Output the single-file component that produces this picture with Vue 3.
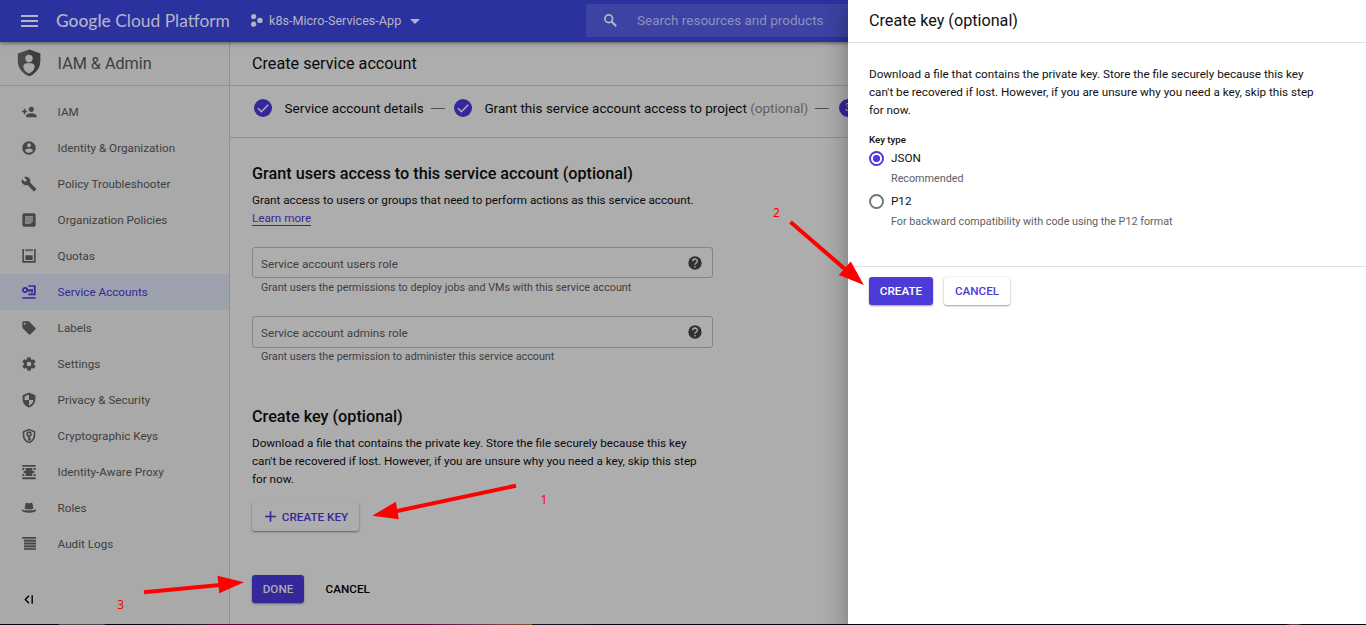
<script setup>
const navItems = [
  { label: 'IAM', icon: 'iam' },
  { label: 'Identity & Organization', icon: 'identity' },
  { label: 'Policy Troubleshooter', icon: 'wrench' },
  { label: 'Organization Policies', icon: 'policies' },
  { label: 'Quotas', icon: 'quotas' },
  { label: 'Service Accounts', icon: 'accounts', active: true },
  { label: 'Labels', icon: 'label' },
  { label: 'Settings', icon: 'settings' },
  { label: 'Privacy & Security', icon: 'security' },
  { label: 'Cryptographic Keys', icon: 'crypto' },
  { label: 'Identity-Aware Proxy', icon: 'proxy' },
  { label: 'Roles', icon: 'roles' },
  { label: 'Audit Logs', icon: 'logs' },
]

const icons = {
  iam: 'M15.500 12c2.200 0 4-1.800 4-4s-1.800-4-4-4-4 1.800-4 4 1.800 4 4 4zM6.500 10V7H4.200v3H1.500v2.300h2.700v3h2.300v-3h2.700V10zm9 4c-2.700 0-8 1.300-8 4v2h16v-2c0-2.700-5.300-4-8-4z',
  identity: 'M12 2C6.500 2 2 6.500 2 12s4.500 10 10 10 10-4.500 10-10S17.500 2 12 2zm0 3a3 3 0 110 6 3 3 0 010-6zm0 14.200c-2.500 0-4.700-1.300-6-3.200 0-2 4-3.100 6-3.100s6 1.100 6 3.100a7.200 7.200 0 01-6 3.200z',
  wrench: 'M22.700 19l-9.100-9.100c.9-2.300.4-5-1.500-6.900-2-2-5-2.400-7.400-1.300L9 6 6 9 1.600 4.700C.4 7.100.9 10.100 2.900 12.100c1.900 1.900 4.600 2.400 6.900 1.500l9.100 9.100c.4.4 1 .4 1.400 0l2.300-2.300c.5-.4.5-1.100.1-1.400z',
  label: 'M21.400 11.600l-9-9C12 2.200 11.500 2 11 2H4c-1.100 0-2 .9-2 2v7c0 .5.200 1 .6 1.400l9 9c.8.8 2 .8 2.800 0l7-7c.8-.8.8-2 0-2.800zM5.500 7a1.500 1.500 0 110-3 1.500 1.500 0 010 3z',
  settings: 'M19.400 13l.1-1-.1-1 2.100-1.600c.2-.2.3-.5.1-.7l-2-3.500c-.1-.2-.4-.3-.6-.2l-2.500 1a7 7 0 00-1.700-1l-.4-2.600c0-.2-.2-.4-.5-.4h-4c-.2 0-.4.2-.5.4L9 5a7 7 0 00-1.700 1l-2.500-1c-.2-.1-.5 0-.6.2l-2 3.500c-.1.2-.1.500.1.700L4.500 11l-.1 1 .1 1-2.100 1.600c-.2.2-.3.500-.1.700l2 3.500c.1.200.4.300.6.200l2.500-1a7 7 0 001.700 1l.4 2.600c0 .2.200.4.5.4h4c.2 0 .4-.2.5-.4L15 19a7 7 0 001.700-1l2.500 1c.2.1.5 0 .6-.2l2-3.500c.1-.2.1-.5-.1-.7zM12 15.500a3.500 3.500 0 110-7 3.500 3.500 0 010 7z',
  security: 'M12 .8L2.400 4.800v6.200c0 5.500 4 10.900 9.600 12.200 5.600-1.300 9.600-6.700 9.600-12.200V4.800zm0 11.200h6.600c-.5 4-3 7.300-6.600 8.400V12H5.400V6.800L12 3.900z',
  crypto: 'M12 1L2.600 5v6c0 5.500 4 10.700 9.400 12 5.400-1.300 9.400-6.500 9.400-12V5zm0 2.400l7 3V11c0 4.500-3 8.400-7 9.700C8 19.400 5 15.500 5 11V6.400zM12 5a4.200 4.200 0 00-1.300 8.200V19h2.600v-1.300H15v-2.200h-1.700v-2.300A4.200 4.200 0 0012 5zm0 2.500a1.700 1.700 0 110 3.400 1.700 1.700 0 010-3.400z',
  roles: 'M5.500 13l1-6.500C7.300 3.500 9.500 4 12 5.300c2.500-1.300 4.700-1.800 5.500 1.200l1 6.500c-3.500 1.500-9.500 1.500-13 0zM1 14c4.500 2.400 17.500 2.400 22 0 .8 7-22.800 7-22 0z',
}
</script>

<template>
  <div class="page">
    <header class="topbar">
      <svg class="burger" viewBox="0 0 17 12"><path d="M0 1h17M0 6h17M0 11h17" stroke="currentColor" stroke-width="1.800" /></svg>
      <div class="brand"><b>Google</b> Cloud Platform</div>
      <div class="project">
        <svg class="hex" viewBox="0 0 12 13" fill="currentColor"><circle cx="3.200" cy="2.600" r="2.600" /><circle cx="9.400" cy="6.400" r="2.700" /><circle cx="3.200" cy="10.200" r="2.600" /></svg>
        <span class="project-name">k8s-Micro-Services-App</span>
        <svg class="caret" viewBox="0 0 10 5"><path d="M0 0h10L5 5z" fill="currentColor" /></svg>
      </div>
      <div class="search">
        <svg viewBox="0 0 24 24" fill="none" stroke="currentColor"><circle cx="9.500" cy="9.500" r="5.400" stroke-width="2.400" /><path d="M13.700 13.700l6.300 6.300" stroke-width="3" /></svg>
        <span>Search resources and products</span>
      </div>
    </header>

    <div class="body">
      <aside class="sidebar">
        <div class="product">
          <svg class="shield" viewBox="0 0 24 28">
            <path d="M12 .5L.8 4.600V12c0 7 4.600 12.600 11.200 15.300C18.600 24.600 23.200 19 23.200 12V4.600z" fill="#494949" />
            <path d="M12 .5L23.200 4.600V12c0 7-4.600 12.600-11.200 15.300z" fill="#3d3d3d" />
            <circle cx="12" cy="9.500" r="3.700" fill="#a9a9a9" />
            <path d="M6.400 17.200c0-2.300 2.300-3.300 5.600-3.300s5.600 1 5.600 3.300c0 3.600-2.300 6-5.600 7.300-3.300-1.300-5.600-3.700-5.600-7.300z" fill="#a9a9a9" />
          </svg>
          <span>IAM &amp; Admin</span>
        </div>
        <nav>
          <div v-for="n in navItems" :key="n.label" class="nav-item" :class="{ active: n.active }">
            <svg viewBox="0 0 24 24" fill="currentColor">
              <path v-if="icons[n.icon]" :d="icons[n.icon]" fill-rule="evenodd" />
              <template v-else-if="n.icon === 'policies'">
                <rect x="2" y="2" width="20" height="20" rx="2.500" />
                <path d="M6 6h12v8l-4 4H6z" fill="#858585" />
                <path d="M6 9h12M6 12.500h12" stroke="#777" stroke-width="1" />
              </template>
              <template v-else-if="n.icon === 'quotas'">
                <path d="M3.200 1.500v19.300h17.600V1.500" fill="none" stroke="currentColor" stroke-width="2.400" />
                <path d="M6.500 11h11v7h-11zM6.500 1.500h2V5h-2zm3 0h2V5h-2zm3 0h2V5h-2zm3 0h2V5h-2z" />
              </template>
              <template v-else-if="n.icon === 'accounts'">
                <circle cx="6" cy="9" r="3.200" fill="none" stroke="currentColor" stroke-width="2.600" />
                <path d="M9 9h9M16.500 9v4M12.500 9v3M11 3h9.700v12.700H11M2 21h20" fill="none" stroke="currentColor" stroke-width="2.600" />
              </template>
              <template v-else-if="n.icon === 'proxy'">
                <path d="M2 1.500h20V4.200H2zM2 20h20v2.700H2zM7 6h10v12H7zM2 6h3v3H2zM19 6h3v3h-3zM2 15h3v3H2zM19 15h3v3h-3zM4 10.500h16v3H4z" />
              </template>
              <template v-else-if="n.icon === 'logs'">
                <path d="M1.500 1.500h21V4h-21z" />
                <path d="M4.500 4h18v16.500h-18z" opacity=".35" />
                <path d="M4.500 6h18v2.200h-18zM4.500 10.200h18v2.200h-18zM4.500 14.400h18v2.200h-18zM4.500 18.300h18v2.200h-18z" />
              </template>
            </svg>
            <span>{{ n.label }}</span>
          </div>
        </nav>
        <svg class="collapse" viewBox="0 0 10 9"><path d="M5 .7L1.300 4.500 5 8.300M8.200 .3v8.400" fill="none" stroke="currentColor" stroke-width="1.400" /></svg>
      </aside>

      <main class="main">
        <h1 class="page-title">Create service account</h1>
        <div class="stepper">
          <svg class="step" viewBox="0 0 18 18"><circle cx="9" cy="9" r="9" /><path d="M4 9.300l3.400 3.400 6.800-7" /></svg>
          <span class="s1">Service account details</span>
          <i class="dash"></i>
          <svg class="step" viewBox="0 0 18 18"><circle cx="9" cy="9" r="9" /><path d="M4 9.300l3.400 3.400 6.800-7" /></svg>
          <span class="s2">Grant this service account access to project <em>(optional)</em></span>
          <i class="dash"></i>
          <span class="step num">3</span>
        </div>

        <section class="content">
          <h2 class="h-users">Grant users access to this service account (optional)</h2>
          <p class="text t-users">Grant access to users or groups that need to perform actions as this service account.</p>
          <div class="learn"><a>Learn more</a></div>

          <div class="field f1">
            <span>Service account users role</span>
            <svg viewBox="0 0 24 24"><circle cx="12" cy="12" r="10" fill="#313131" /><path d="M8.500 9.500a3.500 3.500 0 117 0c0 2.300-3.500 2.600-3.500 5" fill="none" stroke="#adadad" stroke-width="2" /><rect x="11" y="16.500" width="2" height="2.200" fill="#adadad" /></svg>
          </div>
          <p class="hint n1">Grant users the permissions to deploy jobs and VMs with this service account</p>
          <div class="field f2">
            <span>Service account admins role</span>
            <svg viewBox="0 0 24 24"><circle cx="12" cy="12" r="10" fill="#313131" /><path d="M8.500 9.500a3.500 3.500 0 117 0c0 2.300-3.500 2.600-3.500 5" fill="none" stroke="#adadad" stroke-width="2" /><rect x="11" y="16.500" width="2" height="2.200" fill="#adadad" /></svg>
          </div>
          <p class="hint n2">Grant users the permission to administer this service account</p>

          <h2 class="h-key">Create key (optional)</h2>
          <p class="text">Download a file that contains the private key. Store the file securely because this key<br>can't be recovered if lost. However, if you are unsure why you need a key, skip this step<br>for now.</p>
          <button class="btn create-key">
            <svg viewBox="0 0 12 12"><path d="M6 .2v11.600M.2 6h11.600" stroke="currentColor" stroke-width="1.800" /></svg>
            <span>CREATE KEY</span>
          </button>
          <div class="actions">
            <button class="btn done">DONE</button>
            <button class="btn plain">CANCEL</button>
          </div>
        </section>
      </main>
    </div>

    <aside class="drawer">
      <h1 class="drawer-title">Create key (optional)</h1>
      <div class="drawer-body">
        <p class="text">Download a file that contains the private key. Store the file securely because this key<br>can't be recovered if lost. However, if you are unsure why you need a key, skip this step<br>for now.</p>
        <div class="key-type">Key type</div>
        <div class="radio"><i class="dot on"></i><span>JSON</span></div>
        <p class="hint">Recommended</p>
        <div class="radio r2"><i class="dot"></i><span>P12</span></div>
        <p class="hint">For backward compatibility with code using the P12 format</p>
      </div>
      <div class="drawer-actions">
        <button class="btn create">CREATE</button>
        <button class="btn cancel">CANCEL</button>
      </div>
    </aside>

    <div class="desktop-edge"></div>

    <svg class="marks" viewBox="0 0 1366 625">
      <g stroke="#f00" stroke-width="4" fill="#f00">
        <path d="M516 485.700L396 511.200" /><path d="M372.300 515.700l23.500-14 3 17.500z" stroke="none" />
        <path d="M790.500 222L846 270" /><path d="M863.800 285l-13-23.500-12 13.500z" stroke="none" />
        <path d="M144 592.200L220 584.900" /><path d="M244 582.300l-26.500-6.500 1.800 17.500z" stroke="none" />
      </g>
      <g class="digits"><text x="540.500" y="504">1</text><text x="773" y="217">2</text><text x="117.300" y="609">3</text></g>
    </svg>
  </div>
</template>

<style>
body { margin: 0; overflow: hidden; }
</style>

<style scoped>
.page {
  position: relative; width: 1366px; height: 625px; overflow: hidden;
  display: flex; flex-direction: column;
  background: #adadad; font-family: Roboto, "Liberation Sans", sans-serif; font-size: 11.7px; color: #0a0a0a;
}
.page * { box-sizing: border-box; }
h1, h2, p { margin: 0; font-weight: 400; white-space: nowrap; }
svg { display: block; flex: none; }
.topbar {
  position: relative; z-index: 1; flex: none; height: 42px; display: flex; align-items: center; padding-bottom: 1px;
  background: #2b329f; color: #b4b5c4; box-shadow: 0 1px 4px rgba(0, 0, 0, .5); white-space: nowrap;
}
.burger { width: 17px; height: 12px; margin-left: 20.500px; }
.brand { width: 175px; margin-left: 18.500px; font-family: Lato, sans-serif; font-size: 17.400px; line-height: 24px; }
.brand b { font-weight: 500; }
.project { display: flex; align-items: center; width: 170px; margin-left: 19px; font-size: 12.600px; }
.hex { width: 13px; height: 13px; margin-top: -1px; }
.project-name { width: 134px; margin-left: 6px; }
.caret { width: 10px; height: 5px; margin-left: 7px; margin-top: 1px; }
.search { display: flex; align-items: center; height: 33px; width: 500px; margin-left: 166px; background: #3d43a3; border-radius: 2px; font-size: 13.500px; color: #8d90bd; }
.search svg { width: 17px; height: 17px; margin-left: 16px; color: #b4b5c4; }
.search span { margin-left: 18px; margin-top: -1px; }
.body { flex: 1; display: flex; min-height: 0; }
.sidebar { width: 230px; flex: none; background: #a9a9a9; border-right: 1px solid #919191; color: #404040; }
.product { height: 44px; display: flex; align-items: center; border-bottom: 1px solid #919191; font-size: 16.200px; color: #3e3e3e; }
.shield { width: 24px; height: 28px; margin: -1px 17.100px 0 16.500px; }
nav { padding-top: 8px; }
.nav-item { height: 36px; display: flex; align-items: center; }
.nav-item svg { width: 16px; height: 16px; margin: -1px 20.600px 0 21px; color: #474747; }
.nav-item.active { background: #9da1ae; color: #34289a; }
.nav-item.active svg { color: #34289a; }
.collapse { width: 10px; height: 9px; margin: 33px 0 0 23.500px; color: #000; }
.main { flex: 1; min-width: 0; }
.page-title { height: 44px; line-height: 43px; padding-left: 22px; border-bottom: 1px solid #919191; font-size: 16.200px; }
.stepper { height: 52px; display: flex; align-items: center; padding: 0 0 7px 24px; border-bottom: 1px solid #919191; font-size: 13.500px; white-space: nowrap; }
.stepper em { font-style: normal; color: #606060; }
.step { width: 18px; height: 18px; flex: none; }
.step circle { fill: #34289a; }
.step path { fill: none; stroke: #b0b0b8; stroke-width: 1.500; }
.s1 { width: 139.400px; margin-left: 12.600px; }
.s2 { width: 323.600px; margin-left: 12.400px; }
.dash { flex: none; width: 14px; height: 1px; background: #4f4f4f; margin: 0 9px 0 7px; }
.num { margin-left: 1px; border-radius: 50%; background: #34289a; color: #b0b0b8; font-size: 11px; line-height: 18px; text-align: center; }
.content { padding-left: 22px; }
h2 { font-size: 16.220px; font-weight: 500; line-height: 24px; }
.h-users { margin-top: 24px; }
.text { line-height: 18px; }
.t-users { margin-top: 5px; }
.learn { height: 18px; line-height: 18px; }
.learn a { display: inline-block; height: 16px; line-height: 16px; color: #34289a; border-bottom: 1px solid #34289a; }
.field { width: 461px; height: 31px; display: flex; align-items: center; justify-content: space-between; padding: 2px 9px 0 8px; border: 1px solid #858585; border-radius: 3px; color: #404040; }
.field svg { width: 16px; height: 16px; margin-top: -1px; }
.f1 { margin-top: 20px; }
.hint { font-size: 10.780px; line-height: 18px; color: #404040; padding-left: 9px; }
.n1 { margin-top: 1px; }
.f2 { margin-top: 19px; height: 32px; }
.f2 svg { margin-top: -2px; }
.h-key { margin-top: 39px; }
.h-key + .text { margin-top: 5px; }
.btn { font: 500 11.700px Roboto, sans-serif; border: 0; border-radius: 3px; padding: 0; display: flex; align-items: center; justify-content: center; background: none; }
.create-key { width: 107px; height: 29px; margin-top: 14px; padding-left: 2px; color: #34289a; background: #adadad; box-shadow: 0 1px 2px rgba(0, 0, 0, .45); }
.create-key svg { width: 11px; height: 11px; margin-right: 6px; }
.actions { display: flex; margin-top: 44px; }
.done { width: 52px; height: 28px; background: #34289a; color: #adadad; box-shadow: 0 1px 2px rgba(0, 0, 0, .4); }
.plain { height: 28px; margin-left: 21.600px; color: #000; }
.drawer {
  position: absolute; z-index: 2; left: 848px; top: 0; width: 518px; height: 625px; background: #fff; color: #101010;
  box-shadow: 0 7px 9px -4px rgba(0, 0, 0, .2), 0 14px 22px 2px rgba(0, 0, 0, .14), 0 5px 27px 4px rgba(0, 0, 0, .12);
}
.drawer-title { height: 43px; line-height: 42px; padding-left: 21px; border-bottom: 1px solid #e0e0e0; font-size: 16.200px; }
.drawer-body { height: 224px; padding: 22px 0 0 21px; border-bottom: 1px solid #e0e0e0; }
.key-type { margin-top: 14px; font-size: 9.720px; font-weight: 500; line-height: 14px; }
.radio { display: flex; align-items: center; height: 19px; margin-top: 1px; }
.radio span { margin-left: 7px; }
.dot { width: 15px; height: 15px; margin-top: 1px; border: 2px solid #757575; border-radius: 50%; }
.dot.on { border-color: #4c3bd9; background: radial-gradient(circle, #4c3bd9 3.300px, transparent 4px); }
.drawer .hint { color: #616161; padding-left: 22px; margin-top: 3px; }
.r2 { margin-top: 3px; }
.drawer-actions { display: flex; gap: 11px; padding: 10px 0 0 21px; }
.create { width: 64px; height: 28px; background: #4c3bd9; color: #fff; box-shadow: 0 1px 2px rgba(0, 0, 0, .4); }
.cancel { width: 66px; height: 28px; background: #fff; color: #4c3bd9; box-shadow: 0 1px 2px rgba(0, 0, 0, .35), 0 0 2px rgba(0, 0, 0, .12); }
.desktop-edge {
  position: absolute; z-index: 3; left: 0; bottom: 0; width: 1366px; height: 1px;
  background: linear-gradient(90deg, #080010 0 59px, #4d4650 59px 103px, #080010 106px 150px, #281528 208px, #6b003d 208px 420px, #753050 480px, #80502b 532px, #141020 532px 580px, #080010 600px 1286px, #70404a 1290px 1298px, #080010 1302px);
}
.marks { position: absolute; z-index: 4; left: 0; top: 0; width: 1366px; height: 625px; }
.digits { fill: #f00; font: 12px "Noto Sans", sans-serif; }
</style>
